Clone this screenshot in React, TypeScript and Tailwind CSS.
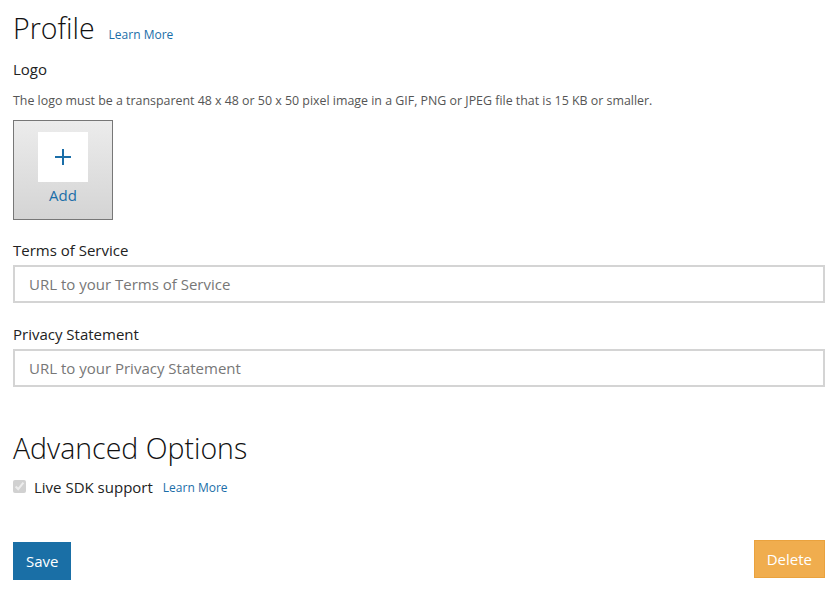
import React from "react";

const font = "font-['Segoe_UI','Open_Sans',sans-serif]";

const Field = ({ label, placeholder }: { label: string; placeholder: string }) => (
  <div className="flex flex-col">
    <label className="text-[15px] leading-[20px] text-[#222]">{label}</label>
    <input
      className="mt-[5px] h-[38px] border-2 border-[#d4d4d4] bg-white px-[14px] text-[15px] text-[#333] placeholder:text-[#777] outline-none"
      placeholder={placeholder}
    />
  </div>
);

const App = () => (
  <div className={`${font} min-h-[599px] w-[837px] bg-white pl-[13px] pr-[12px] text-[#222]`}>
    <div className="flex items-baseline gap-[14px] pt-[8px]">
      <h1 className="text-[28.5px] font-light leading-[40px] text-[#111]">Profile</h1>
      <a className="text-[12px] text-[#1a6ea8]">Learn More</a>
    </div>
    <div className="mt-[11px] text-[15px] leading-[20px]">Logo</div>
    <p className="mt-[14px] text-[12.4px] leading-[16px] text-[#555]">
      The logo must be a transparent 48 x 48 or 50 x 50 pixel image in a GIF, PNG or JPEG file that is 15 KB or
      smaller.
    </p>
    <button className="mt-[11px] flex h-[100px] w-[100px] flex-col items-center border border-[#777] bg-gradient-to-b from-[#ececec] to-[#d4d4d4] pt-[11px]">
      <span className="flex h-[50px] w-[50px] items-center justify-center bg-white">
        <svg width="20" height="20" viewBox="0 0 20 20">
          <path d="M10 2v16M2 10h16" stroke="#1a6ea8" strokeWidth="2" />
        </svg>
      </span>
      <span className="mt-[3px] text-[15px] leading-[20px] text-[#1a6ea8]">Add</span>
    </button>
    <div className="mt-[20px] flex flex-col gap-[21px]">
      <Field label="Terms of Service" placeholder="URL to your Terms of Service" />
      <Field label="Privacy Statement" placeholder="URL to your Privacy Statement" />
    </div>
    <h2 className="mt-[41px] text-[28.5px] font-light leading-[40px] text-[#111]">Advanced Options</h2>
    <div className="mt-[8px] flex items-center">
      <input type="checkbox" checked readOnly disabled className="h-[13px] w-[13px] accent-[#999]" />
      <span className="ml-[8px] text-[15px] leading-[20px]">Live SDK support</span>
      <a className="ml-[10px] mt-[3px] text-[12px] text-[#1a6ea8]">Learn More</a>
    </div>
    <div className="mt-[43px] flex items-start justify-between">
      <button className="mt-[2px] h-[38px] bg-[#1a6fa6] px-[13px] text-[15px] text-white">Save</button>
      <button className="h-[38px] border border-[#eaa23d] bg-[#f0ad4e] px-[12px] text-[15px] text-white">Delete</button>
    </div>
  </div>
);

export default App;
